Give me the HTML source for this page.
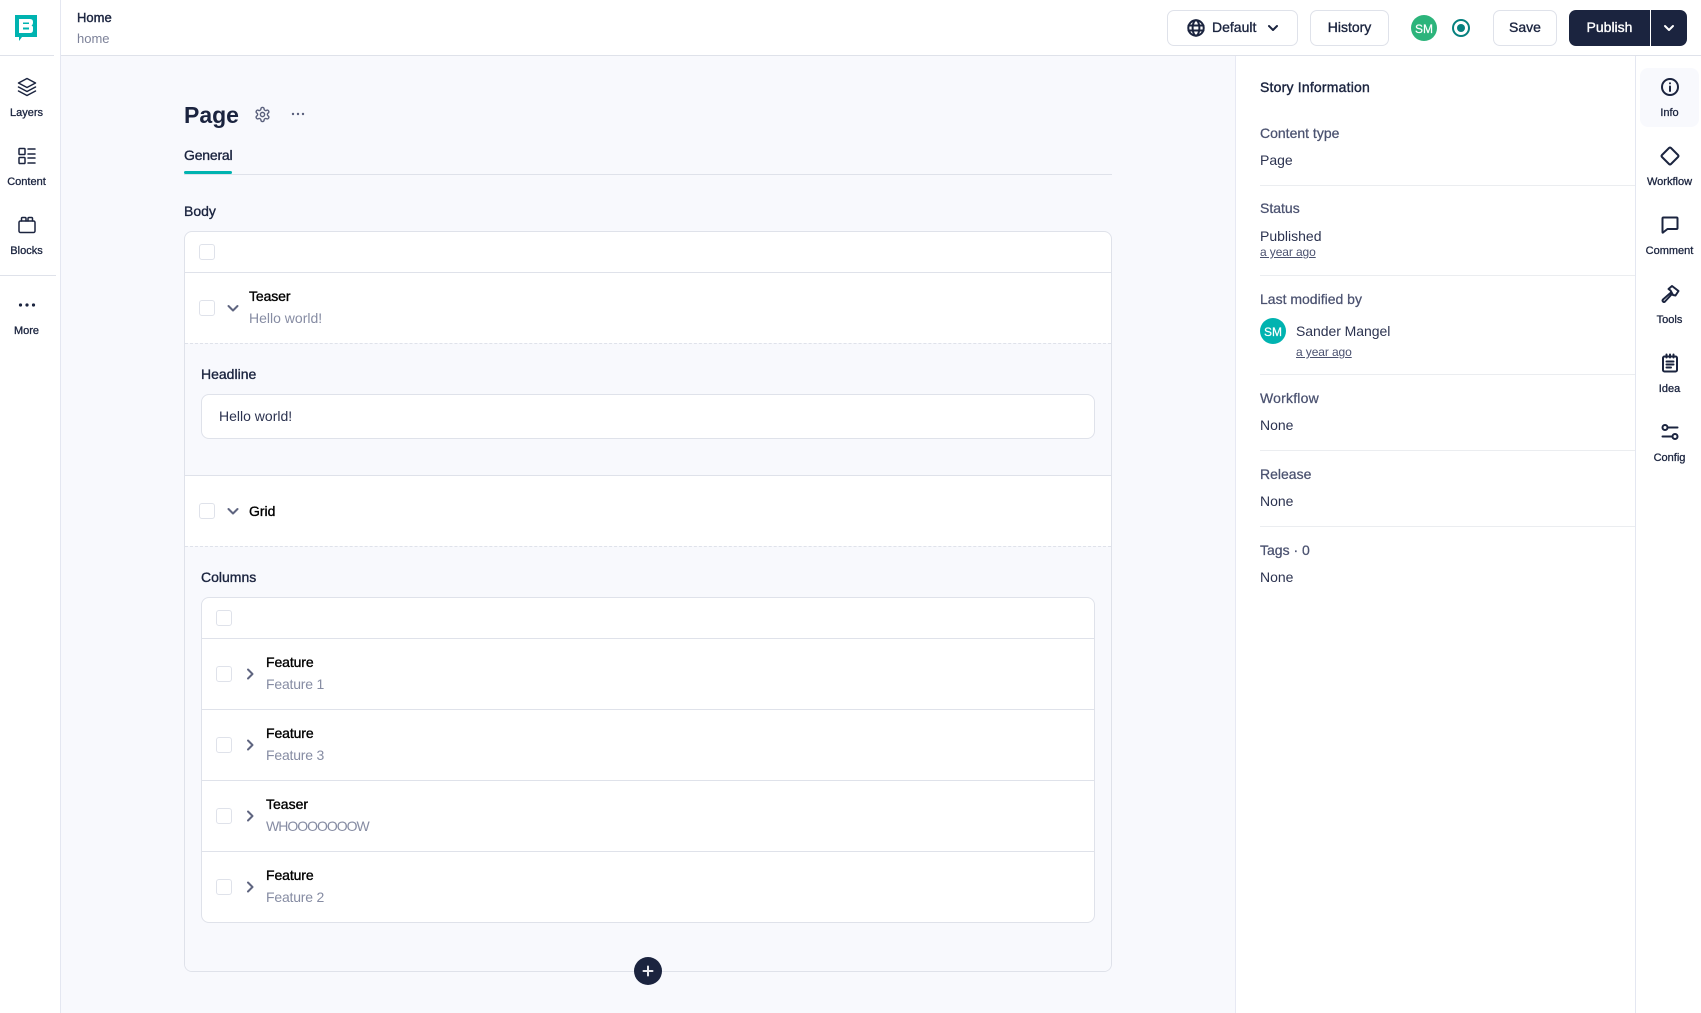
<!DOCTYPE html>
<html lang="en"><head><meta charset="utf-8"><title>Story</title>
<style>
html,body{margin:0;padding:0;background:#fff}
#p{position:relative;width:1701px;height:1013px;overflow:hidden;background:#fff;font-family:"Liberation Sans",sans-serif;color:#1b243f;font-size:14px}
#p div,#p span,#p svg{position:absolute;box-sizing:border-box}
.t{white-space:nowrap;line-height:20px;height:20px}
.m{-webkit-text-stroke:.35px currentColor}
.c{transform:translateX(-50%)}
.n{font-size:11px;color:#1b243f;-webkit-text-stroke:.3px currentColor}
.l{background:#dfe2ea}
.cb{width:16px;height:16px;border:1px solid #dfe2ea;border-radius:3px;background:#fff}
.g{color:#868ca3}
.d{color:#4b5270;-webkit-text-stroke:.25px #4b5270}
.k{color:#000;-webkit-text-stroke:.35px #000}
.btn{background:#fff;border:1px solid #dfe2ea;border-radius:7px;top:10px;height:36px}
svg{fill:none;stroke:#1b243f;stroke-width:2;stroke-linecap:round;stroke-linejoin:round}
.u{text-decoration:underline;font-size:12px;color:#4b5270}
.ch{stroke:#5f6580}
</style></head><body><div id="p">

<!-- backgrounds -->
<div style="left:61px;top:56px;width:1174px;height:957px;background:#f8f9fd"></div>
<div class="l" style="left:0;top:55px;width:1701px;height:1px"></div>
<div class="l" style="left:60px;top:0;width:1px;height:1013px;background:#e4e7f1"></div>
<div style="left:54px;top:55px;width:6px;height:1px;background:#fff"></div>
<div class="l" style="left:1235px;top:56px;width:1px;height:957px;background:#e7e9f3"></div>
<div class="l" style="left:1635px;top:56px;width:1px;height:957px;background:#e4e7f1"></div>
<div class="l" style="left:0;top:275px;width:56px;height:1px"></div>

<!-- logo -->
<svg style="left:15px;top:15px;stroke:none" width="22" height="27" viewBox="0 0 22 27"><path fill="#00b3b0" fill-rule="evenodd" d="M0 0H22V22H7L4 26V22H0ZM4 4V18H15Q18 18 18 15V12.500Q18 11 16.500 10.500Q18 9.500 18 8V7Q18 4 15 4ZM8 7.500H14V9H8ZM8 12.500H14V14.500H8Z"/></svg>

<!-- left nav -->
<svg style="left:17px;top:77px" width="20" height="20" viewBox="0 0 20 20"><path stroke-width="1.500" d="M10 1.500 18.500 6 10 10.500 1.500 6Z"/><path stroke-width="1.500" d="M1.500 10 10 14.500 18.500 10M1.500 14 10 18.500 18.500 14"/></svg>
<span class="t n c" style="left:26.500px;top:103px">Layers</span>
<svg style="left:17px;top:146px" width="20" height="20" viewBox="0 0 20 20"><g stroke-width="1.500"><rect x="2" y="2.500" width="6" height="6" rx=".8"/><rect x="2" y="11.500" width="6" height="6" rx=".8"/><path d="M11 3h7M11 8h7M11 12h7M11 17h7"/></g></svg>
<span class="t n c" style="left:26.500px;top:172px">Content</span>
<svg style="left:17px;top:215px" width="20" height="20" viewBox="0 0 20 20"><g stroke-width="1.500"><rect x="2" y="6" width="16" height="11.500" rx="1.500"/><path d="M4.500 6V3.500Q4.500 2.500 5.500 2.500H8Q9 2.500 9 3.500V6M11 6V3.500Q11 2.500 12 2.500H14.500Q15.500 2.500 15.500 3.500V6"/></g></svg>
<span class="t n c" style="left:26.500px;top:241px">Blocks</span>
<svg style="left:17px;top:295px;stroke:none" width="20" height="20" viewBox="0 0 20 20"><g fill="#1b243f"><circle cx="3.500" cy="10" r="1.600"/><circle cx="10" cy="10" r="1.600"/><circle cx="16.500" cy="10" r="1.600"/></g></svg>
<span class="t n c" style="left:26.500px;top:321px">More</span>

<!-- header -->
<span class="t" style="left:77px;top:8px;font-size:13px;-webkit-text-stroke:.4px #1b243f">Home</span>
<span class="t g" style="left:77px;top:29px;font-size:13px;color:#7d8299">home</span>

<div class="btn" style="left:1167px;width:131px"></div>
<svg style="left:1187px;top:19px" width="18" height="18" viewBox="0 0 18 18" stroke-width="1.300"><circle cx="9" cy="9" r="7.700"/><ellipse cx="9" cy="9" rx="3.400" ry="7.700"/><path d="M1.500 6.500h15M1.500 11.500h15"/></svg>
<span class="t m" style="left:1212px;top:17px">Default</span>
<svg style="left:1267px;top:22px" width="12" height="12" viewBox="0 0 12 12" stroke-width="1.300"><path d="M2 4 6 8 10 4"/></svg>

<div class="btn" style="left:1310px;width:79px"></div>
<span class="t m c" style="left:1349.500px;top:17px">History</span>

<div style="left:1411px;top:15px;width:26px;height:26px;border-radius:50%;background:#2cb47b"></div>
<span class="t c" style="left:1424px;top:19px;font-size:12px;color:#fff;-webkit-text-stroke:.2px #fff">SM</span>
<div style="left:1452px;top:19px;width:18px;height:18px;border-radius:50%;border:2.500px solid #06817f"></div>
<div style="left:1457px;top:24px;width:8px;height:8px;border-radius:50%;background:#06817f"></div>

<div class="btn" style="left:1493px;width:64px"></div>
<span class="t m c" style="left:1525px;top:17px">Save</span>

<div style="left:1569px;top:10px;width:81px;height:36px;background:#1b243f;border-radius:7px 0 0 7px"></div>
<div style="left:1651px;top:10px;width:36px;height:36px;background:#1b243f;border-radius:0 7px 7px 0"></div>
<span class="t m c" style="left:1609.500px;top:17px;color:#fff">Publish</span>
<svg style="left:1663px;top:22px;stroke:#fff" width="12" height="12" viewBox="0 0 12 12" stroke-width="1.400"><path d="M2 4 6 8 10 4"/></svg>

<!-- page title -->
<span class="t" style="left:184px;top:103px;height:24px;line-height:24px;font-size:23px;font-weight:bold">Page</span>
<svg style="left:253.500px;top:105.500px;stroke:#5a607c" width="17" height="17" viewBox="0 0 24 24" stroke-width="1.600"><path d="M12.220 2h-.44a2 2 0 0 0-2 2v.18a2 2 0 0 1-1 1.730l-.43.250a2 2 0 0 1-2 0l-.15-.08a2 2 0 0 0-2.730.730l-.22.380a2 2 0 0 0 .73 2.730l.15.100a2 2 0 0 1 1 1.720v.510a2 2 0 0 1-1 1.740l-.15.090a2 2 0 0 0-.73 2.730l.22.380a2 2 0 0 0 2.730.730l.15-.08a2 2 0 0 1 2 0l.43.250a2 2 0 0 1 1 1.730V20a2 2 0 0 0 2 2h.44a2 2 0 0 0 2-2v-.18a2 2 0 0 1 1-1.730l.43-.25a2 2 0 0 1 2 0l.15.080a2 2 0 0 0 2.730-.73l.22-.39a2 2 0 0 0-.73-2.730l-.15-.08a2 2 0 0 1-1-1.740v-.5a2 2 0 0 1 1-1.740l.15-.09a2 2 0 0 0 .73-2.730l-.22-.38a2 2 0 0 0-2.730-.73l-.15.080a2 2 0 0 1-2 0l-.43-.25a2 2 0 0 1-1-1.730V4a2 2 0 0 0-2-2z"/><circle cx="12" cy="12" r="3"/></svg>
<svg style="left:290px;top:106px;stroke:none" width="16" height="16" viewBox="0 0 16 16"><g fill="#5a607c"><circle cx="3" cy="8" r="1.200"/><circle cx="8" cy="8" r="1.200"/><circle cx="13" cy="8" r="1.200"/></g></svg>

<span class="t m" style="left:184px;top:145px;letter-spacing:-.2px">General</span>
<div class="l" style="left:184px;top:174px;width:928px;height:1px"></div>
<div style="left:184px;top:171px;width:48px;height:3px;background:#00b3b0;border-radius:2px"></div>

<span class="t m" style="left:184px;top:201px">Body</span>

<!-- outer box -->
<div style="left:184px;top:231px;width:928px;height:741px;border:1px solid #dfe2ea;border-radius:8px;background:#fff;overflow:hidden">
  <div style="left:0;top:111px;width:926px;height:133px;background:#f8f9fd"></div>
  <div style="left:0;top:314px;width:926px;height:425px;background:#f8f9fd"></div>
</div>
<div class="l" style="left:185px;top:272px;width:926px;height:1px"></div>
<div style="left:185px;top:343px;width:926px;height:0;border-top:1px dashed #dfe2ea"></div>
<div class="l" style="left:185px;top:475px;width:926px;height:1px"></div>
<div style="left:185px;top:546px;width:926px;height:0;border-top:1px dashed #dfe2ea"></div>

<div class="cb" style="left:199px;top:244px"></div>
<div class="cb" style="left:199px;top:300px"></div>
<svg class="ch" style="left:226px;top:301px" width="14" height="14" viewBox="0 0 14 14" stroke-width="1.300"><path d="M2.500 5 7 9.500 11.500 5"/></svg>
<span class="t k" style="left:249px;top:286px;letter-spacing:-.1px">Teaser</span>
<span class="t g" style="left:249px;top:308px">Hello world!</span>

<span class="t m" style="left:201px;top:364px">Headline</span>
<div style="left:201px;top:394px;width:894px;height:45px;border:1px solid #dfe2ea;border-radius:8px;background:#fff"></div>
<span class="t" style="left:219px;top:406px;color:#2c3350">Hello world!</span>

<div class="cb" style="left:199px;top:503px"></div>
<svg class="ch" style="left:226px;top:504px" width="14" height="14" viewBox="0 0 14 14" stroke-width="1.300"><path d="M2.500 5 7 9.500 11.500 5"/></svg>
<span class="t k" style="left:249px;top:501px">Grid</span>

<span class="t m" style="left:201px;top:567px">Columns</span>

<!-- inner box -->
<div style="left:201px;top:597px;width:894px;height:326px;border:1px solid #dfe2ea;border-radius:8px;background:#fff"></div>
<div class="l" style="left:202px;top:638px;width:892px;height:1px"></div>
<div class="l" style="left:202px;top:709px;width:892px;height:1px"></div>
<div class="l" style="left:202px;top:780px;width:892px;height:1px"></div>
<div class="l" style="left:202px;top:851px;width:892px;height:1px"></div>
<div class="cb" style="left:216px;top:610px"></div>

<div class="cb" style="left:216px;top:666px"></div>
<svg class="ch" style="left:243px;top:667px" width="14" height="14" viewBox="0 0 14 14" stroke-width="1.300"><path d="M5 2.500 9.500 7 5 11.500"/></svg>
<span class="t k" style="left:266px;top:652px;letter-spacing:-.1px">Feature</span>
<span class="t g" style="left:266px;top:674px;letter-spacing:-.2px">Feature 1</span>

<div class="cb" style="left:216px;top:737px"></div>
<svg class="ch" style="left:243px;top:738px" width="14" height="14" viewBox="0 0 14 14" stroke-width="1.300"><path d="M5 2.500 9.500 7 5 11.500"/></svg>
<span class="t k" style="left:266px;top:723px;letter-spacing:-.1px">Feature</span>
<span class="t g" style="left:266px;top:745px;letter-spacing:-.2px">Feature 3</span>

<div class="cb" style="left:216px;top:808px"></div>
<svg class="ch" style="left:243px;top:809px" width="14" height="14" viewBox="0 0 14 14" stroke-width="1.300"><path d="M5 2.500 9.500 7 5 11.500"/></svg>
<span class="t k" style="left:266px;top:794px">Teaser</span>
<span class="t g" style="left:266px;top:816px;letter-spacing:-1px">WHOOOOOOOW</span>

<div class="cb" style="left:216px;top:879px"></div>
<svg class="ch" style="left:243px;top:880px" width="14" height="14" viewBox="0 0 14 14" stroke-width="1.300"><path d="M5 2.500 9.500 7 5 11.500"/></svg>
<span class="t k" style="left:266px;top:865px;letter-spacing:-.1px">Feature</span>
<span class="t g" style="left:266px;top:887px;letter-spacing:-.2px">Feature 2</span>

<!-- plus -->
<div style="left:634px;top:957px;width:28px;height:28px;border-radius:50%;background:#1b243f"></div>
<svg style="left:641px;top:964px;stroke:#e8e9ee" width="14" height="14" viewBox="0 0 14 14" stroke-width="1.200"><path d="M7 2.500V11.500M2.500 7H11.500"/></svg>

<!-- story info panel -->
<span class="t m" style="left:1260px;top:77px;letter-spacing:.2px;-webkit-text-stroke:.4px #1b243f">Story Information</span>
<span class="t d" style="left:1260px;top:123px">Content type</span>
<span class="t" style="left:1260px;top:150px;color:#2c3350">Page</span>
<div class="l" style="left:1260px;top:185px;width:375px;height:1px;background:#ebedf0"></div>
<span class="t d" style="left:1260px;top:198px">Status</span>
<span class="t" style="left:1260px;top:226px;color:#2c3350">Published</span>
<span class="t u" style="left:1260px;top:242px;letter-spacing:-.1px">a year ago</span>
<div class="l" style="left:1260px;top:275px;width:375px;height:1px;background:#ebedf0"></div>
<span class="t d" style="left:1260px;top:289px">Last modified by</span>
<div style="left:1260px;top:318px;width:26px;height:26px;border-radius:50%;background:#00b3b0"></div>
<span class="t c" style="left:1273px;top:322px;font-size:12px;color:#fff;-webkit-text-stroke:.2px #fff">SM</span>
<span class="t" style="left:1296px;top:321px;color:#2c3350;letter-spacing:-.05px">Sander Mangel</span>
<span class="t u" style="left:1296px;top:342px;letter-spacing:-.1px">a year ago</span>
<div class="l" style="left:1260px;top:374px;width:375px;height:1px;background:#ebedf0"></div>
<span class="t d" style="left:1260px;top:388px;letter-spacing:.2px">Workflow</span>
<span class="t" style="left:1260px;top:415px;color:#2c3350">None</span>
<div class="l" style="left:1260px;top:450px;width:375px;height:1px;background:#ebedf0"></div>
<span class="t d" style="left:1260px;top:464px">Release</span>
<span class="t" style="left:1260px;top:491px;color:#2c3350">None</span>
<div class="l" style="left:1260px;top:526px;width:375px;height:1px;background:#ebedf0"></div>
<span class="t d" style="left:1260px;top:540px">Tags · 0</span>
<span class="t" style="left:1260px;top:567px;color:#2c3350">None</span>

<!-- right nav -->
<div style="left:1640px;top:68px;width:59px;height:59px;border-radius:8px;background:#f8f9fd"></div>
<svg style="left:1660px;top:77px" width="20" height="20" viewBox="0 0 20 20" stroke-width="1.400"><circle cx="10" cy="10" r="8"/><path d="M10 9.500V14M10 6.300V6.400"/></svg>
<span class="t n c" style="left:1669.500px;top:103px">Info</span>
<svg style="left:1660px;top:146px" width="20" height="20" viewBox="0 0 20 20" stroke-width="1.400"><path d="M10 1.500Q10.500 1.500 11 2L18 9Q19 10 18 11L11 18Q10 19 9 18L2 11Q1 10 2 9L9 2Q9.500 1.500 10 1.500Z"/></svg>
<span class="t n c" style="left:1669.500px;top:172px">Workflow</span>
<svg style="left:1660px;top:215px" width="20" height="20" viewBox="0 0 20 20" stroke-width="1.400"><path d="M3.500 2.500H16.500Q17.500 2.500 17.500 3.500V13Q17.500 14 16.500 14H7.500L3 17.500Q2.500 18 2.500 17V3.500Q2.500 2.500 3.500 2.500Z"/></svg>
<span class="t n c" style="left:1669.500px;top:241px">Comment</span>
<svg style="left:1660px;top:284px" width="20" height="20" viewBox="0 0 20 20" stroke-width="1.400"><path d="M11 8.500 3 15.500Q2 16.500 3 17.500T5 17.500L12 10M8.500 5 12 2 18.500 7 15.500 11.500 13 11 10.500 6.500Z"/></svg>
<span class="t n c" style="left:1669.500px;top:310px">Tools</span>
<svg style="left:1660px;top:353px" width="20" height="20" viewBox="0 0 20 20" stroke-width="1.400"><rect x="3" y="3.500" width="14" height="15" rx="1.500"/><path d="M6.500 1.500V4.500M10 1.500V4.500M13.500 1.500V4.500M6.500 8.500H13.500M6.500 11.500H13.500M6.500 14.500H11"/></svg>
<span class="t n c" style="left:1669.500px;top:379px">Idea</span>
<svg style="left:1660px;top:422px" width="20" height="20" viewBox="0 0 20 20" stroke-width="1.400"><circle cx="5" cy="5.500" r="2.500"/><path d="M7.500 5.500H17.500M2.500 14.500H12.500"/><circle cx="15" cy="14.500" r="2.500"/></svg>
<span class="t n c" style="left:1669.500px;top:448px">Config</span>

</div></body></html>
